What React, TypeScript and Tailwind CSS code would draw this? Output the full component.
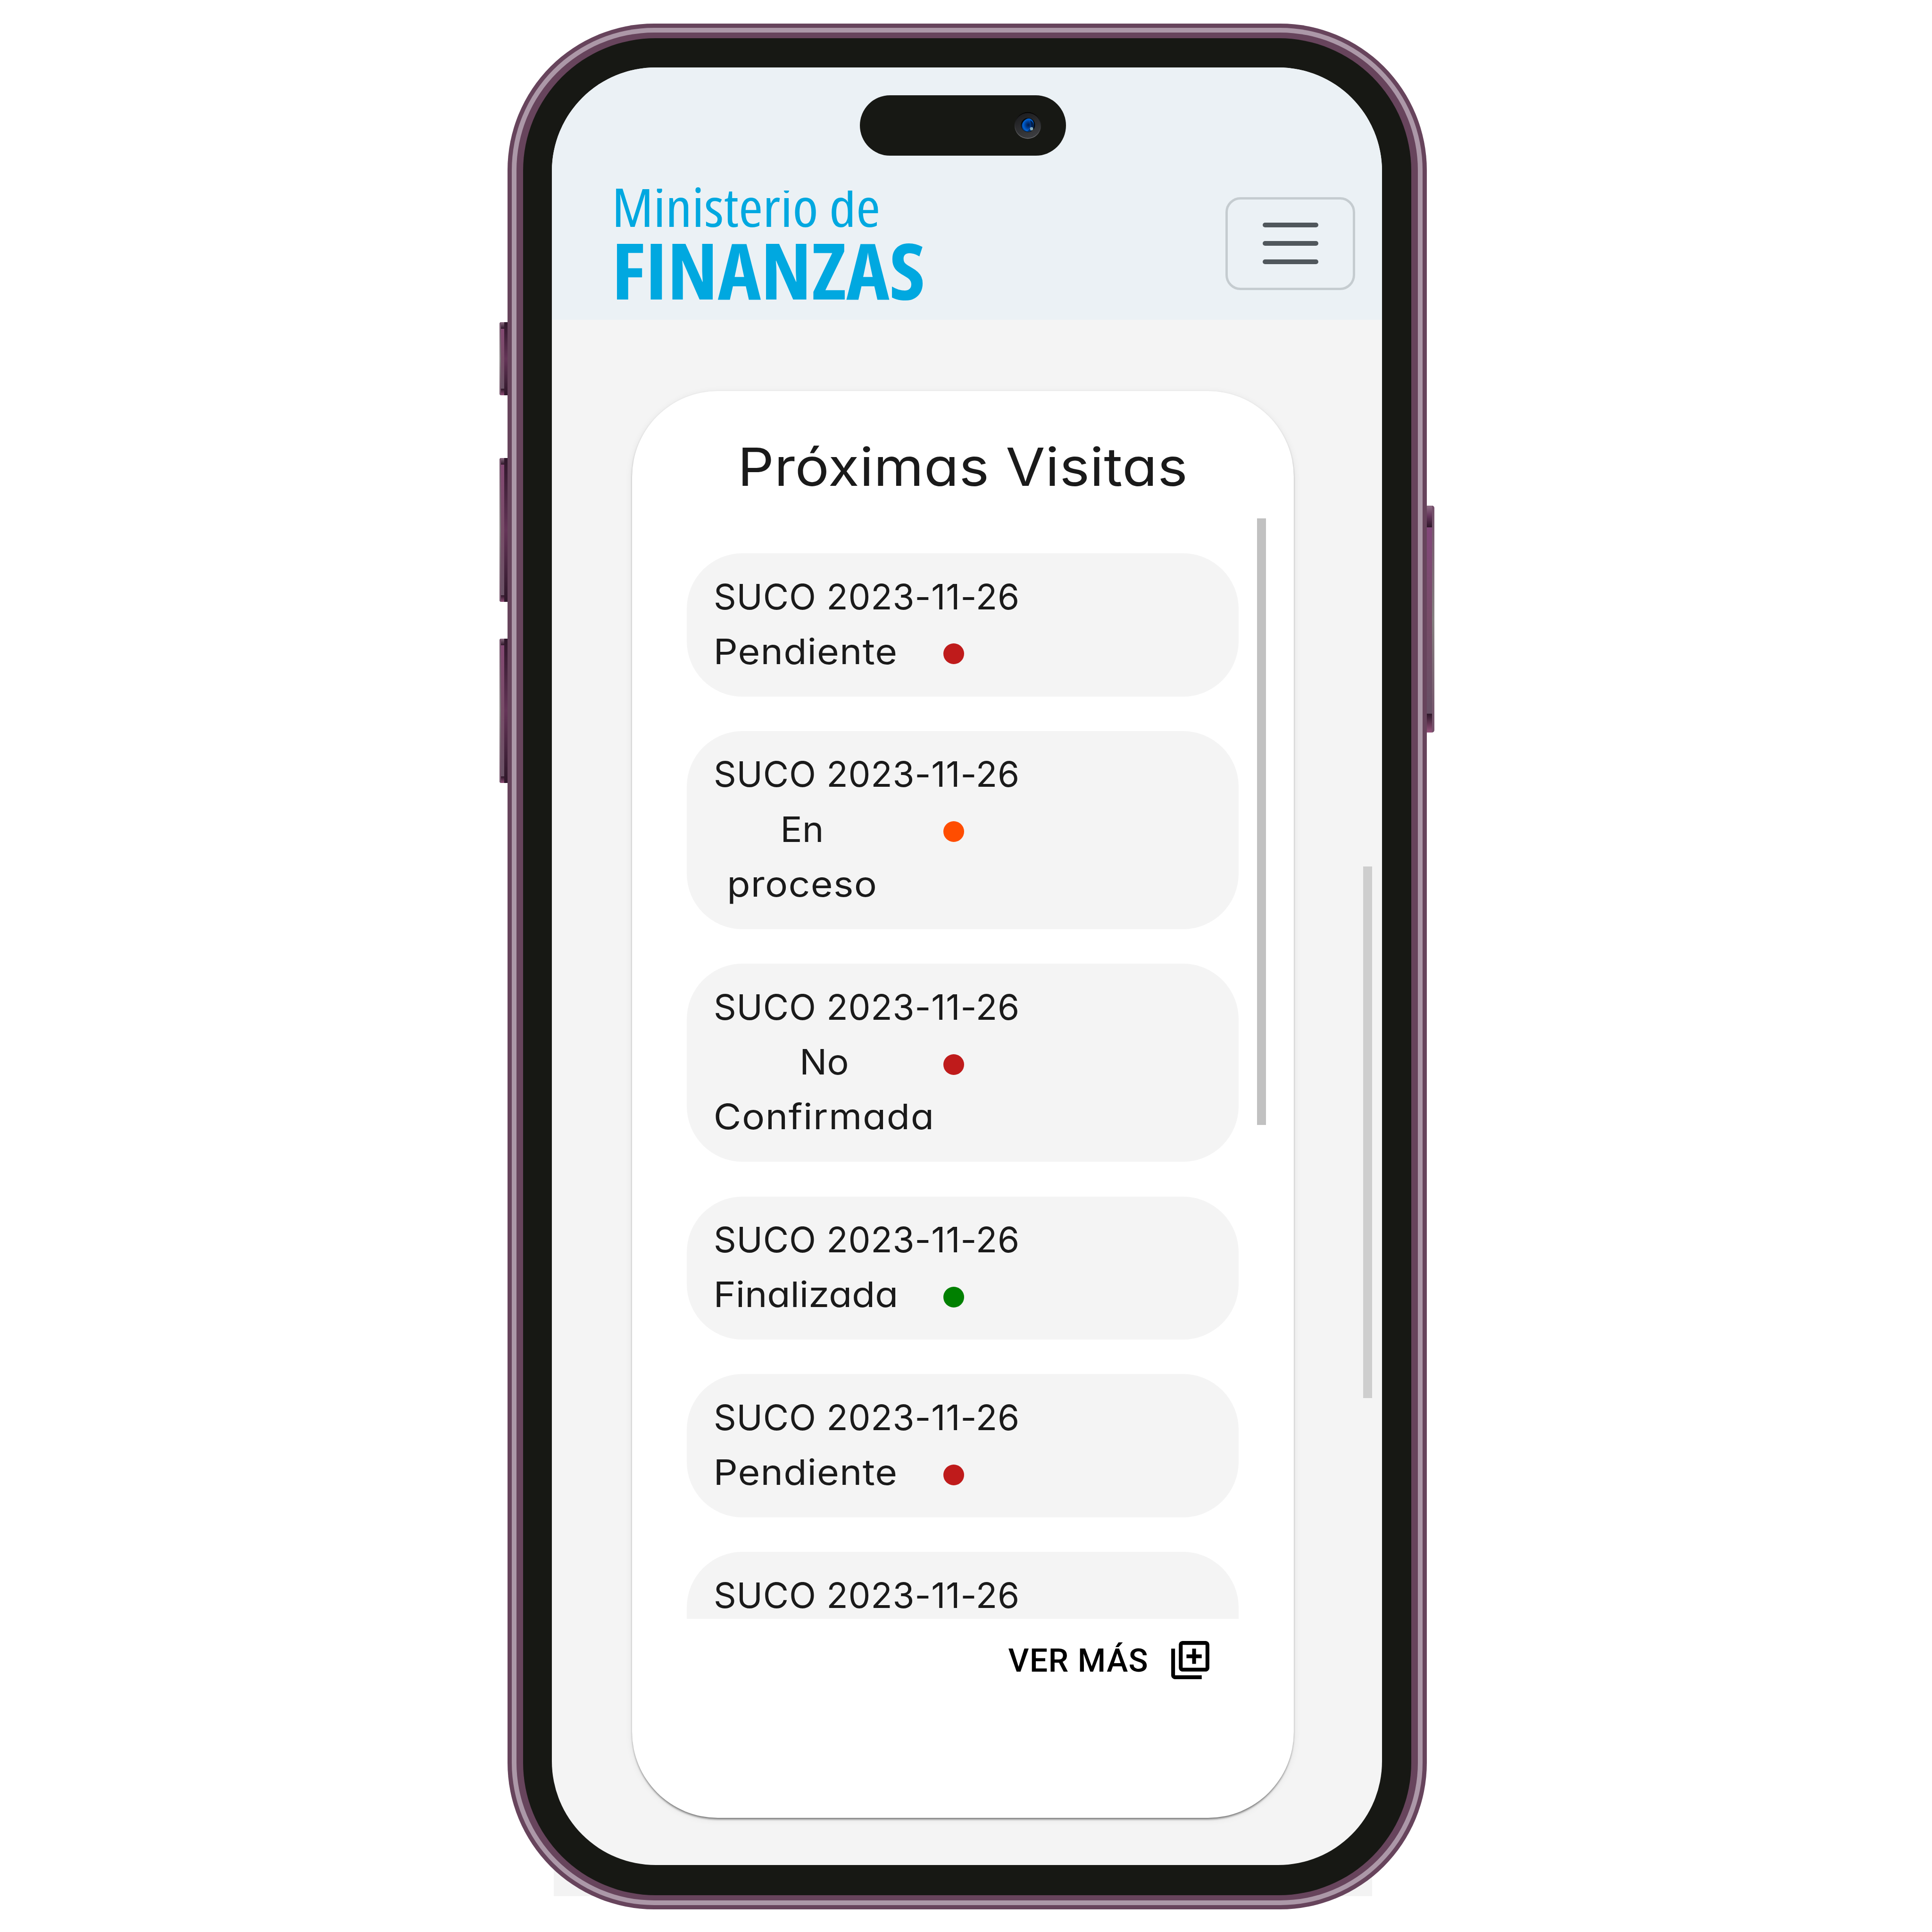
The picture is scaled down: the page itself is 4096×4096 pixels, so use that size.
import type { ReactNode } from "react";

type Visit = {
  lines: string[];
  column: string;
  tracking: string;
  dot: string;
};

const RED = "bg-[#bf1b1b]";

const visits: Visit[] = [
  { lines: ["Pendiente"], column: "w-[390px]", tracking: "tracking-[1px]", dot: RED },
  { lines: ["En", "proceso"], column: "w-[375px]", tracking: "tracking-[1.2px]", dot: "bg-[#ff4d00]" },
  { lines: ["No", "Confirmada"], column: "w-[469px]", tracking: "tracking-[1.4px]", dot: RED },
  { lines: ["Finalizada"], column: "w-[390px]", tracking: "tracking-[-0.2px]", dot: "bg-[#008000]" },
  { lines: ["Pendiente"], column: "w-[390px]", tracking: "tracking-[1px]", dot: RED },
  { lines: ["Pendiente"], column: "w-[390px]", tracking: "tracking-[1px]", dot: RED },
];

function VisitItem({ visit }: { visit: Visit }) {
  return (
    <li className="shrink-0 rounded-[118px] bg-[#f4f4f4] pt-[33.5px] pb-[37.7px] pl-[57px] text-[74.5px] leading-[116.3px]">
      <p className="tracking-[0.75px] whitespace-nowrap">SUCO 2023-11-26</p>
      <div className="flex">
        <div className="w-[487px]">
          <div className={"flex flex-col items-center " + visit.column}>
            {visit.lines.map((line) => (
              <span
                key={line}
                className={
                  line.length < 3
                    ? "scale-x-[1.04] whitespace-nowrap"
                    : "scale-x-[1.08] whitespace-nowrap " + visit.tracking
                }
              >
                {line}
              </span>
            ))}
          </div>
        </div>
        <span className={"mt-[41.5px] size-[44px] rounded-full " + visit.dot} />
      </div>
    </li>
  );
}

function SideKey({ className }: { className: string }) {
  return (
    <div className={"absolute flex w-[17px] overflow-hidden rounded-l-[4px] bg-[#7b6f78] " + className}>
      <span className="w-[3px] bg-gradient-to-b from-[#74506a] via-[#858080] to-[#74506a]" />
      <span className="flex w-[7px] flex-col">
        <span className="h-[14px] bg-gradient-to-b from-[#8e6d84] to-[#2e1729]" />
        <span className="flex-1 bg-gradient-to-b from-[#834872] via-[#774d68] to-[#6a5266]" />
        <span className="h-[14px] bg-gradient-to-b from-[#2e1729] to-[#93517a]" />
      </span>
      <span className="flex-1 bg-gradient-to-b from-[#2e1729] via-[#653558] to-[#2e1729]" />
    </div>
  );
}

function PowerKey() {
  return (
    <div className="absolute top-[1021.5px] left-[1949px] flex h-[481px] w-[16px] overflow-hidden rounded-r-[5px]">
      <span className="flex w-[11px] flex-col">
        <span className="h-[46px] bg-gradient-to-b from-[#8e6d84] via-[#63345a] to-[#2e1729]" />
        <span className="flex-1 bg-gradient-to-b from-[#82477a] via-[#774d68] to-[#675065]" />
        <span className="h-[40px] bg-gradient-to-b from-[#2e1729] to-[#96547c]" />
      </span>
      <span className="flex-1 bg-gradient-to-b from-[#74506a] via-[#858080] to-[#74506a]" />
    </div>
  );
}

function Camera() {
  return (
    <svg className="size-[58px]" viewBox="0 0 58 58">
      <defs>
        <linearGradient id="rim" x1="0" y1="0" x2="0" y2="1">
          <stop offset="0" stopColor="#000" />
          <stop offset="0.5" stopColor="#2c2d2f" />
          <stop offset="1" stopColor="#6b6b6d" />
        </linearGradient>
        <linearGradient id="ring" x1="0" y1="0" x2="0.4" y2="1">
          <stop offset="0" stopColor="#19191b" />
          <stop offset="1" stopColor="#3a3b3e" />
        </linearGradient>
        <radialGradient id="lens" cx="0.55" cy="0.5" r="0.55">
          <stop offset="0" stopColor="#001a48" />
          <stop offset="0.4" stopColor="#003a8c" />
          <stop offset="0.8" stopColor="#0064d8" />
          <stop offset="1" stopColor="#003576" />
        </radialGradient>
      </defs>
      <circle cx="29" cy="29" r="28.2" fill="url(#rim)" />
      <circle cx="29" cy="29" r="26.6" fill="url(#ring)" />
      <circle cx="29.5" cy="28" r="15" fill="#03080c" />
      <path d="M16 30C16 23 24 14 31 14C38 14 42 21 42 28C42 36 36 42 29 42C21 42 16 37 16 30Z" fill="url(#lens)" />
      <path d="M34 18C39 20 43 26 42 31C40 38 34 41 28 41C33 38 38 33 36 26Z" fill="#020c22" opacity="0.7" />
      <circle cx="37" cy="36" r="3.4" fill="#9fc4cf" opacity="0.85" />
    </svg>
  );
}

function LibraryAddIcon() {
  return (
    <svg className="size-[97px]" viewBox="0 0 24 24" fill="#000">
      <path d="M4 6H2v14c0 1.1.9 2 2 2h14v-2H4V6z" />
      <path
        fillRule="evenodd"
        d="M20 2H8c-1.100 0-2 .9-2 2v12c0 1.100.9 2 2 2h12c1.100 0 2-.9 2-2V4c0-1.100-.9-2-2-2zm0 14H8V4h12v12z"
      />
      <path d="M13 6h2v3h3v2h-3v3h-2v-3h-3V9h3V6z" />
    </svg>
  );
}

function Header() {
  return (
    <header className="flex h-[534.500px] shrink-0 justify-between bg-[#ebf1f5] pr-[57px] pl-[127px]">
      <div className="pt-[241px] font-['Open_Sans',sans-serif] text-[#00a8e0] [font-stretch:75%]">
        <div className="w-[600px] origin-left scale-x-[1.09] text-[114px] leading-[105px] whitespace-nowrap [clip-path:polygon(0_-10px,48px_-10px,48px_17px,78px_17px,78px_16px,115px_16px,115px_-10px,209px_-10px,209px_20px,100%_20px,100%_100%,0_100%)]">
          Ministerio de
        </div>
        <div className="w-[640px] origin-left scale-x-[1.048] text-[165px] leading-[165px] font-bold whitespace-nowrap">FINANZAS</div>
      </div>
      <button className="mt-[274.500px] flex h-[197px] w-[275px] flex-col items-center justify-center gap-[29.300px] rounded-[32px] border-[5px] border-[#c5ccd0]">
        <span className="h-[10px] w-[118px] rounded-full bg-[#50575c]" />
        <span className="h-[10px] w-[118px] rounded-full bg-[#50575c]" />
        <span className="h-[10px] w-[118px] rounded-full bg-[#50575c]" />
      </button>
    </header>
  );
}

function VisitsCard() {
  return (
    <section className="mt-[151px] ml-[170px] flex h-[3025.500px] w-[1403px] flex-col rounded-[182px] bg-white pt-[93px] shadow-[0_5px_4px_-2px_rgba(0,0,0,0.42),0_2px_4px_rgba(0,0,0,0.16),0_3px_16px_rgba(0,0,0,0.08)]">
      <h1 className="flex justify-center pr-[2px] text-[112px] leading-[135px]">
        <span className="scale-x-[1.08] tracking-[0.5px] whitespace-nowrap">Próximas Visitas</span>
      </h1>
      <div className="mt-[42px] flex h-[2333.500px] shrink-0 overflow-hidden pl-[116px]">
        <ul className="flex w-[1170px] flex-col gap-[73.200px] pt-[74.500px]">
          {visits.map((visit, i) => (
            <VisitItem key={i} visit={visit} />
          ))}
        </ul>
        <div className="ml-[38.500px] h-[1286px] w-[19.500px] bg-[#c1c1c1]" />
      </div>
      <div className="mt-[39px] flex items-center justify-end gap-[40px] pr-[171px]">
        <span className="pt-[2px] font-['Roboto',sans-serif] text-[68px] leading-[80px] font-medium tracking-[1.300px] text-black">
          VER MÁS
        </span>
        <LibraryAddIcon />
      </div>
    </section>
  );
}

function PhoneFrame({ children }: { children: ReactNode }) {
  return (
    <div className="relative h-[3998px] w-[1949px] rounded-[311px] bg-[#67445c] p-[9px]">
      <SideKey className="top-[632.500px] left-[-17px] h-[155.500px]" />
      <SideKey className="top-[920.500px] left-[-17px] h-[305px]" />
      <SideKey className="top-[1303.500px] left-[-17px] h-[306px]" />
      <PowerKey />
      <div className="h-full rounded-[302px] bg-[#ac98a8] p-[10px]">
        <div className="h-full rounded-[292px] bg-[#67445c] px-[14px] pt-[11.500px] pb-[11.500px]">
          <div className="h-full rounded-[281px] bg-[#171814] pt-[62.500px] pr-[62px] pb-[63.500px] pl-[61px]">
            <div className="relative flex h-full flex-col overflow-hidden rounded-[220px] bg-[#f4f4f4]">{children}</div>
          </div>
        </div>
      </div>
    </div>
  );
}

export default function App() {
  return (
    <main className="relative flex h-[4096px] w-[4096px] overflow-hidden bg-white pt-[50px] pl-[1076px] font-['Inter',sans-serif] text-[#1a1a1a] [font-feature-settings:'cv11']">
      <div className="absolute top-[3500px] left-[1174px] h-[519.500px] w-[1735px] bg-[#f3f3f3]" />
      <PhoneFrame>
        <Header />
        <VisitsCard />
        <div className="absolute top-[59px] left-[652.500px] flex h-[127.500px] w-[437.500px] items-center justify-end rounded-full bg-[#171814] pr-[52.500px]">
          <Camera />
        </div>
        <div className="absolute top-[1694px] right-[21px] h-[1126.500px] w-[19px] bg-[#cecece]" />
      </PhoneFrame>
    </main>
  );
}
